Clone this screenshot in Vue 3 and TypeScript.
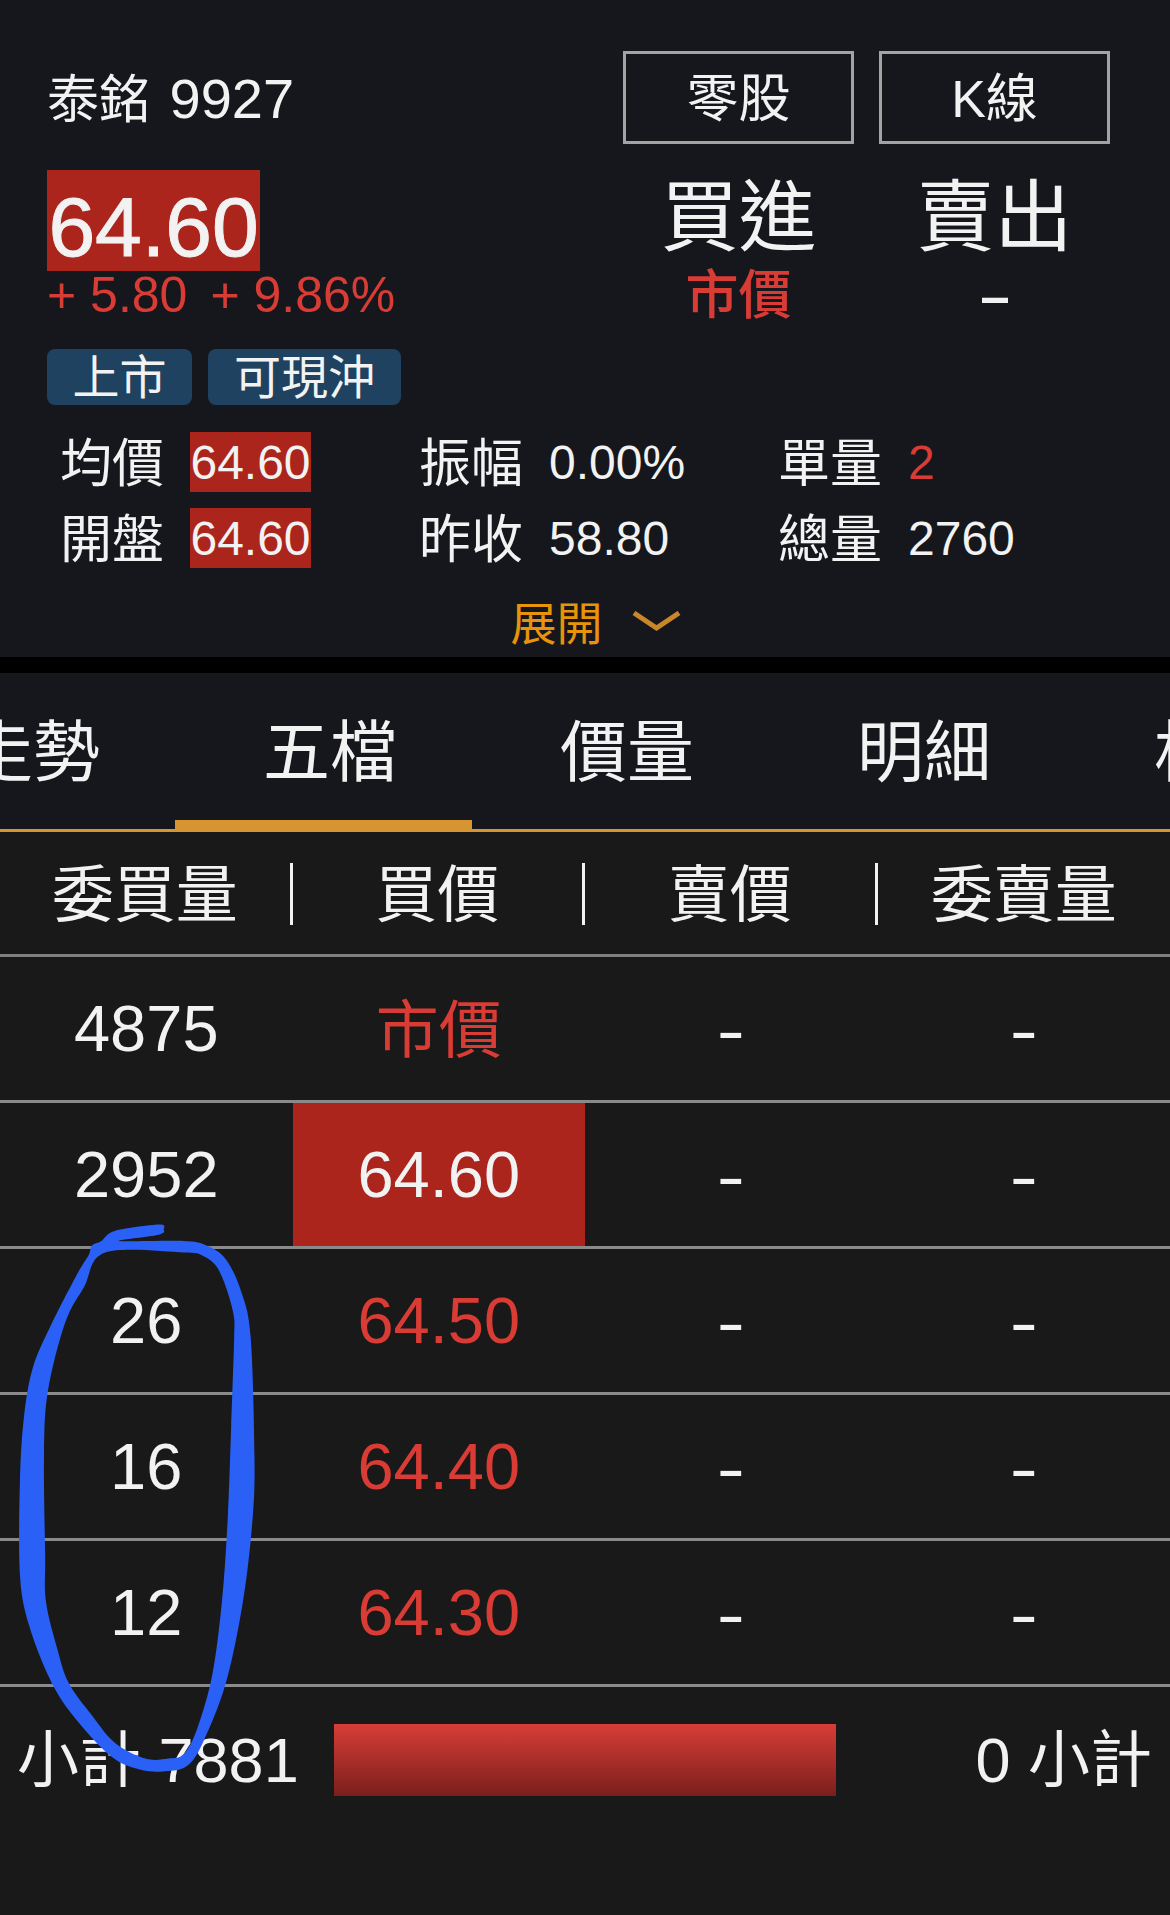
<script setup lang="ts">
type P = [number, number]
const stats = [
  [{ l: '均價', v: '64.60', k: 'box' }, { l: '振幅', v: '0.00%', k: '' }, { l: '單量', v: '2', k: 'red' }],
  [{ l: '開盤', v: '64.60', k: 'box' }, { l: '昨收', v: '58.80', k: '' }, { l: '總量', v: '2760', k: '' }],
]
const tabs = ['走勢', '五檔', '價量', '明細', '相關']
const heads = ['委買量', '買價', '賣價', '委賣量']
const rows = [
  { q: '4875', p: '市價', k: 'red cjk' },
  { q: '2952', p: '64.60', k: 'hit' },
  { q: '26', p: '64.50', k: 'red' },
  { q: '16', p: '64.40', k: 'red' },
  { q: '12', p: '64.30', k: 'red' },
]
const outer: P[] = [[428,64],[415,54],[300,68],[265,90],[240,100],[232,120],[200,165],[130,280],[85,370],[62,480],[52,620],[52,820],[75,930],[130,1050],[190,1130],[290,1220],[370,1250],[440,1252],[490,1240],[530,1190],[590,1060],[635,880],[660,700],[665,560],[655,300],[630,200],[590,130],[540,100],[480,90],[310,90],[415,76]]
const inner: P[] = [[275,115],[480,115],[530,122],[565,145],[590,190],[610,250],[612,300],[604,500],[595,700],[580,880],[555,1040],[515,1160],[480,1215],[440,1225],[380,1225],[300,1190],[240,1130],[180,1060],[150,985],[120,880],[118,780],[115,560],[125,420],[170,270],[220,190]]
function smooth(p: P[]): string {
  let d = `M${p[0][0]} ${p[0][1]}`
  const n = p.length
  for (let i = 0; i < n; i++) {
    const a = p[(i - 1 + n) % n], b = p[i], c = p[(i + 1) % n], e = p[(i + 2) % n]
    const c1 = [b[0] + (c[0] - a[0]) / 6, b[1] + (c[1] - a[1]) / 6]
    const c2 = [c[0] - (e[0] - b[0]) / 6, c[1] - (e[1] - b[1]) / 6]
    d += `C${c1[0].toFixed(1)} ${c1[1].toFixed(1)} ${c2[0].toFixed(1)} ${c2[1].toFixed(1)} ${c[0]} ${c[1]}`
  }
  return d + 'Z'
}
const circle = smooth(outer) + smooth(inner)
</script>

<template>
  <div class="page">
    <section class="quote">
      <div class="top">
        <div class="name"><span class="name-zh">泰銘</span> 9927</div>
        <div class="btns">
          <div class="btn">零股</div>
          <div class="btn">K線</div>
        </div>
      </div>
      <div class="mid">
        <div class="price-col">
          <div class="price">64.60</div>
          <div class="chg"><span>+ 5.80</span><span>+ 9.86%</span></div>
        </div>
        <div class="sides">
          <div class="side"><div class="big">買進</div><div class="sub">市價</div></div>
          <div class="side"><div class="big">賣出</div><div class="sub dash"><span>-</span></div></div>
        </div>
      </div>
      <div class="tags"><span class="tag t1">上市</span><span class="tag t2">可現沖</span></div>
      <div class="stats">
        <div v-for="(r, i) in stats" :key="i" class="stat-row">
          <div v-for="s in r" :key="s.l" class="stat">
            <span class="lab">{{ s.l }}</span>
            <span class="val" :class="s.k">{{ s.v }}</span>
          </div>
        </div>
      </div>
      <div class="expand">
        <span>展開</span>
        <svg width="49" height="20" viewBox="0 0 49 20"><path d="M2 2L24.500 17L47 2" fill="none" stroke="#c9872a" stroke-width="5"/></svg>
      </div>
    </section>
    <div class="gap"></div>
    <nav class="tabs">
      <div v-for="t in tabs" :key="t" class="tab" :class="{ on: t === '五檔' }">{{ t }}</div>
    </nav>
    <section class="book">
      <div class="head">
        <div v-for="h in heads" :key="h" class="hcell">{{ h }}</div>
      </div>
      <div v-for="r in rows" :key="r.q" class="row">
        <div class="cell">{{ r.q }}</div>
        <div class="cell" :class="r.k">{{ r.p }}</div>
        <div class="cell"><span class="hy">-</span></div>
        <div class="cell"><span class="hy">-</span></div>
      </div>
      <div class="total">
        <div class="t-left"><span class="t-zh">小計</span> 7881</div>
        <div class="bar"></div>
        <div class="t-right">0 <span class="t-zh">小計</span></div>
      </div>
    </section>
    <svg class="ink" viewBox="0 0 1568 1568" preserveAspectRatio="none"><path :d="circle" fill="#2a60f6" fill-rule="evenodd"/></svg>
  </div>
</template>

<style>
html, body { margin: 0; background: #191919; }
</style>

<style scoped>
.page {
  position: relative;
  width: 1170px;
  height: 1915px;
  overflow: hidden;
  background: #191919;
  color: #f2f2f2;
  font-family: "Liberation Sans", "Noto Sans CJK TC", sans-serif;
}
.quote {
  height: 657px;
  box-sizing: border-box;
  padding: 51px 60px 0 47px;
  background: #15171d;
}
.top { display: flex; justify-content: space-between; height: 93px; }
.name { font-size: 56px; line-height: 95px; white-space: nowrap; }
.name-zh { font-size: 52px; margin-right: 3px; }
.btns { display: flex; gap: 25px; }
.btn {
  width: 231px;
  box-sizing: border-box;
  border: 3px solid #a3a3a3;
  text-align: center;
  font-size: 52px;
  line-height: 91px;
}
.mid { display: flex; justify-content: space-between; margin-top: 26px; height: 152px; }
.price {
  width: 213px;
  height: 101px;
  background: #ab251c;
  font-size: 84px;
  line-height: 114px;
  text-align: center;
  white-space: nowrap;
  -webkit-text-stroke: 1px #f2f2f2;
}
.chg {
  display: flex;
  gap: 23px;
  margin-top: -1px;
  font-size: 50px;
  line-height: 50px;
  color: #d93b35;
  white-space: nowrap;
}
.sides { display: flex; gap: 25px; }
.side { width: 231px; text-align: center; }
.big { font-size: 78px; line-height: 90px; margin-top: 3px; }
.sub { font-size: 53px; line-height: 62px; color: #d93b35; font-weight: 500; margin-top: 2px; }
.dash { color: #f2f2f2; font-size: 84px; font-weight: 400; line-height: 60px; }
.dash span { display: inline-block; transform: scale(1.27, 0.8); }
.tags { display: flex; gap: 16px; margin-top: 27px; }
.tag {
  height: 56px;
  box-sizing: border-box;
  border-radius: 8px;
  background: #1f4260;
  text-align: center;
  font-size: 47px;
  line-height: 58px;
}
.t1 { width: 145px; }
.t2 { width: 193px; }
.stats { margin-top: 27px; display: flex; flex-direction: column; gap: 16px; }
.stat-row { display: flex; height: 60px; }
.stat { display: flex; align-items: center; width: 330px; }
.stat:first-child { width: 372px; padding-left: 13px; box-sizing: border-box; }
.stat:nth-child(2) { width: 359px; }
.lab { font-size: 52px; width: 130px; flex: none; padding-bottom: 5px; }
.stat:first-child .lab { width: 130px; }
.val { font-size: 48px; line-height: 62px; height: 60px; white-space: nowrap; }
.val.box { background: #ab251c; width: 121px; text-align: center; }
.val.red { color: #d93b35; }
.expand {
  display: flex;
  align-items: center;
  justify-content: center;
  gap: 29px;
  margin-top: 31px;
  padding-left: 34px;
  font-size: 46px;
  line-height: 50px;
  color: #e8930c;
}
.expand svg { margin-bottom: 7px; }
.gap { height: 16px; background: #000; }
.tabs {
  display: flex;
  height: 156px;
  box-sizing: border-box;
  margin-left: -122px;
  width: 1292px;
  background: #15171d;
  overflow: hidden;
}
.tab {
  width: 297px;
  height: 156px;
  flex: none;
  box-sizing: border-box;
  padding-left: 13px;
  text-align: center;
  font-size: 67px;
  line-height: 160px;
}
.tab.on { border-bottom: 9px solid #d79433; }
.book { border-top: 3px solid #d79433; }
.head { display: grid; grid-template-columns: repeat(4, 1fr); height: 125px; box-sizing: border-box; border-bottom: 3px solid #808080; padding: 31px 0 29px; }
.hcell { text-align: center; font-size: 62px; line-height: 66px; height: 62px; border-right: 3px solid #f2f2f2; }
.hcell:last-child { border-right: 0; }
.row { display: grid; grid-template-columns: repeat(4, 1fr); height: 146px; box-sizing: border-box; border-bottom: 3px solid #8a8a8a; }
.cell { text-align: center; font-size: 65px; line-height: 143px; }
.cell.red { color: #d93b35; }
.cell.cjk { font-size: 63px; line-height: 146px; }
.cell.hit { background: #ab251c; }
.hy { display: inline-block; transform: translateY(2px) scaleX(1.3); }
.total { display: flex; align-items: center; height: 146px; font-size: 63px; padding-right: 18px; }
.t-zh { font-size: 62px; }
.t-left { width: 334px; box-sizing: border-box; padding: 0 0 10px 17px; white-space: nowrap; }
.bar { width: 502px; height: 72px; background: linear-gradient(#d93d37, #7a1f1c); }
.t-right { flex: 1; text-align: right; white-space: nowrap; padding-bottom: 10px; }
.ink { position: absolute; left: 0; top: 1200px; width: 600px; height: 715px; }
</style>
